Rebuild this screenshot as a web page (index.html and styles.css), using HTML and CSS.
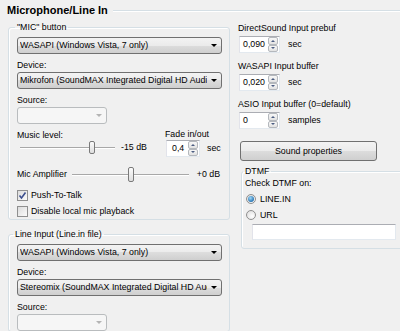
FILE: index.html
```html
<!DOCTYPE html>
<html lang="en">

<head>
    <meta charset="UTF-8">
    <meta name="viewport" content="width=device-width, initial-scale=1.0">
    <title>Microphone/Line In</title>
    <link rel="stylesheet" href="styles.css">
</head>

<body>
    <div class="heading">
        <span>Microphone/Line In</span>
        <div class="heading-line"></div>
    </div>

    <div class="columns">
        <div class="col-left">
            <fieldset class="group">
                <legend>"MIC" button</legend>
                <div class="combo">
                    <span class="combo-text">WASAPI (Windows Vista, 7 only)</span>
                    <span class="combo-btn"><span class="combo-arrow"></span></span>
                </div>
                <div class="field-label">Device:</div>
                <div class="combo">
                    <span class="combo-text">Mikrofon (SoundMAX Integrated Digital HD Audio)</span>
                    <span class="combo-btn"><span class="combo-arrow"></span></span>
                </div>
                <div class="field-label">Source:</div>
                <div class="combo combo-small disabled">
                    <span class="combo-text"></span>
                    <span class="combo-btn"><span class="combo-arrow"></span></span>
                </div>

                <div class="level-row">
                    <div class="level">
                        <div class="level-label">Music level:</div>
                        <div class="slider-row">
                            <div class="slider slider-music">
                                <div class="slider-track"></div>
                                <div class="slider-thumb" style="left: 69px"></div>
                            </div>
                            <span>-15 dB</span>
                        </div>
                    </div>
                    <div class="fade">
                        <div class="fade-label">Fade in/out</div>
                        <div class="spin-row">
                            <div class="spin spin-fade">
                                <span class="spin-value">0,4</span>
                                <span class="spin-buttons">
                                    <span class="spin-btn"><span class="arrow-up"></span></span>
                                    <span class="spin-btn"><span class="arrow-down"></span></span>
                                </span>
                            </div>
                            <span>sec</span>
                        </div>
                    </div>
                </div>

                <div class="amp-row">
                    <span>Mic Amplifier</span>
                    <div class="slider slider-amp">
                        <div class="slider-track"></div>
                        <div class="slider-thumb" style="left: 56px"></div>
                    </div>
                    <span>+0 dB</span>
                </div>

                <label class="check check-first">
                    <span class="box">
                        <svg width="9" height="9" viewBox="0 0 9 9"><polyline points="1.5,4.5 3.5,7 7.5,1.5" fill="none" stroke="#3c4f8e" stroke-width="1.6"/></svg>
                    </span>
                    Push-To-Talk
                </label>
                <label class="check">
                    <span class="box"></span>
                    Disable local mic playback
                </label>
            </fieldset>

            <fieldset class="group group-line">
                <legend>Line Input (Line.in file)</legend>
                <div class="combo">
                    <span class="combo-text">WASAPI (Windows Vista, 7 only)</span>
                    <span class="combo-btn"><span class="combo-arrow"></span></span>
                </div>
                <div class="field-label">Device:</div>
                <div class="combo">
                    <span class="combo-text">Stereomix (SoundMAX Integrated Digital HD Audio)</span>
                    <span class="combo-btn"><span class="combo-arrow"></span></span>
                </div>
                <div class="field-label">Source:</div>
                <div class="combo combo-small disabled">
                    <span class="combo-text"></span>
                    <span class="combo-btn"><span class="combo-arrow"></span></span>
                </div>
            </fieldset>
        </div>

        <div class="col-right">
            <div class="buf-label">DirectSound Input prebuf</div>
            <div class="spin-row buf-row">
                <div class="spin spin-buf">
                    <span class="spin-value">0,090</span>
                    <span class="spin-buttons">
                        <span class="spin-btn"><span class="arrow-up"></span></span>
                        <span class="spin-btn"><span class="arrow-down"></span></span>
                    </span>
                </div>
                <span>sec</span>
            </div>

            <div class="buf-label">WASAPI Input buffer</div>
            <div class="spin-row buf-row">
                <div class="spin spin-buf">
                    <span class="spin-value">0,020</span>
                    <span class="spin-buttons">
                        <span class="spin-btn"><span class="arrow-up"></span></span>
                        <span class="spin-btn"><span class="arrow-down"></span></span>
                    </span>
                </div>
                <span>sec</span>
            </div>

            <div class="buf-label">ASIO Input buffer (0=default)</div>
            <div class="spin-row buf-row">
                <div class="spin spin-buf">
                    <span class="spin-value">0</span>
                    <span class="spin-buttons">
                        <span class="spin-btn"><span class="arrow-up"></span></span>
                        <span class="spin-btn"><span class="arrow-down"></span></span>
                    </span>
                </div>
                <span>samples</span>
            </div>

            <button type="button" class="btn">Sound properties</button>

            <fieldset class="group group-dtmf">
                <legend>DTMF</legend>
                <div class="dtmf-label">Check DTMF on:</div>
                <label class="radio"><span class="dot checked"></span>LINE.IN</label>
                <label class="radio"><span class="dot"></span>URL</label>
                <div class="url-input"></div>
            </fieldset>
        </div>
    </div>
</body>

</html>
```

FILE: styles.css
```css
body {
    margin: 0;
    width: 400px;
    height: 331px;
    overflow: hidden;
    background-color: #f0f0f0;
    color: #000;
    font-family: "Liberation Sans", Arial, sans-serif;
    font-size: 8.8px;
    line-height: 11px;
}

.heading {
    display: flex;
    align-items: center;
    gap: 5px;
    padding: 3px 0 0 7px;
    font-size: 11px;
    font-weight: bold;
    line-height: 14px;
}

.heading-line {
    flex: 1;
    margin-top: 2px;
    border-top: 1px solid #d5dfe5;
    border-bottom: 1px solid #fff;
}

.columns {
    display: flex;
    gap: 8px;
    padding: 4px 0 0 8px;
}

.col-left {
    width: 222px;
    flex-shrink: 0;
}

.col-right {
    flex: 1;
    min-width: 0;
    padding-top: 2px;
}

/* group boxes */

.group {
    box-sizing: border-box;
    width: 100%;
    min-width: 0;
    margin: 0;
    padding: 4px 7px 0 8px;
    border: 1px solid #d5dfe5;
    border-radius: 3px;
    box-shadow: inset 1px 1px 0 #fff;
}

.group legend {
    margin-left: -2px;
    padding: 0 2px;
    line-height: 12px;
}

.group-line {
    margin-top: 8px;
}

.group-line legend {
    margin-left: -4px;
}

.field-label {
    margin: 6px 0 1px;
}

/* combo boxes */

.combo {
    display: flex;
    align-items: center;
    box-sizing: border-box;
    height: 17px;
    padding-left: 2px;
    border: 1px solid #707070;
    border-radius: 3px;
    background: linear-gradient(#f3f3f3, #ebebeb 50%, #dddddd 50%, #cfcfcf);
}

.combo-text {
    flex: 1;
    overflow: hidden;
    white-space: nowrap;
}

.combo-btn {
    display: flex;
    justify-content: center;
    width: 14px;
}

.combo-arrow {
    width: 0;
    height: 0;
    border-left: 3px solid transparent;
    border-right: 3px solid transparent;
    border-top: 3px solid #000;
}

.combo-small {
    width: 90px;
}

.combo.disabled {
    border-color: #b9bcbe;
    background: #f6f6f6;
}

.combo.disabled .combo-arrow {
    border-top-color: #b4b4b4;
}

/* sliders */

.level-row {
    display: flex;
    margin-top: 5px;
}

.level {
    width: 148px;
    padding-top: 1px;
}

.slider-row {
    display: flex;
    align-items: center;
    gap: 6px;
}

.slider {
    position: relative;
    display: flex;
    align-items: center;
    height: 13px;
}

.slider-track {
    flex: 1;
    height: 1px;
    background-color: #a8a8a8;
    border-bottom: 1px solid #fff;
}

.slider-thumb {
    position: absolute;
    top: 0;
    box-sizing: border-box;
    width: 6px;
    height: 13px;
    border: 1px solid #7a7a7a;
    border-radius: 2px;
    background: linear-gradient(#fbfbfb, #dedede);
}

.slider-music {
    width: 95px;
    margin-left: 3px;
}

.amp-row {
    display: flex;
    align-items: center;
    height: 15px;
    margin-top: 10px;
}

.slider-amp {
    width: 117px;
    height: 15px;
    margin: 0 8px 0 5px;
}

.slider-amp .slider-thumb {
    height: 15px;
}

/* spin edits */

.spin-row {
    display: flex;
    align-items: center;
    gap: 7px;
}

.spin {
    display: flex;
    box-sizing: border-box;
    height: 17px;
    border: 1px solid #abadb3;
    border-color: #abadb3 #e3e9ef #e3e9ef #e2e3ea;
    background-color: #fff;
}

.spin-value {
    flex: 1;
    padding-left: 5px;
    line-height: 15px;
}

.spin-buttons {
    display: flex;
    flex-direction: column;
    width: 10px;
    margin: 0 1px 0 0;
}

.spin-btn {
    display: flex;
    flex: 1;
    align-items: center;
    justify-content: center;
    border: 1px solid #b4b8bd;
    border-radius: 2px;
    background: linear-gradient(#f7f7f7, #e2e2e2);
}

.arrow-up,
.arrow-down {
    width: 0;
    height: 0;
    border-left: 2px solid transparent;
    border-right: 2px solid transparent;
}

.arrow-up {
    border-bottom: 2px solid #4b5d82;
}

.arrow-down {
    border-top: 2px solid #4b5d82;
}

.spin-fade {
    width: 34px;
    margin-left: 1px;
}

/* check boxes and radios */

.check,
.radio {
    display: flex;
    align-items: center;
    gap: 3px;
    height: 16px;
}

.check-first {
    margin-top: 5px;
}

.box {
    display: flex;
    align-items: center;
    justify-content: center;
    box-sizing: border-box;
    width: 11px;
    height: 11px;
    border: 1px solid #8f8f8f;
    background: linear-gradient(135deg, #dcdcdc, #fbfbfb);
}

.dot {
    position: relative;
    box-sizing: border-box;
    width: 10px;
    height: 10px;
    margin-left: 1px;
    border: 1px solid #8f8f8f;
    border-radius: 50%;
    background: radial-gradient(circle at 65% 65%, #fff, #d8d8d8);
}

.dot.checked::after {
    content: "";
    position: absolute;
    top: 1px;
    left: 1px;
    width: 6px;
    height: 6px;
    border-radius: 50%;
    background: radial-gradient(circle at 40% 35%, #9fd8f8, #2a76b4 70%, #1c4f80);
}

.radio {
    gap: 4px;
}

/* right column */

.buf-label {
    margin-top: 8px;
}

.buf-label:first-child {
    margin-top: 0;
}

.buf-row {
    gap: 8px;
    margin-top: 2px;
    padding-left: 1px;
}

.spin-buf {
    width: 41px;
}

.spin-buf .spin-value {
    padding-left: 3px;
}

.btn {
    display: block;
    box-sizing: border-box;
    width: 137px;
    height: 20px;
    margin: 12px 0 0 2px;
    padding: 0;
    border: 1px solid #707070;
    border-radius: 3px;
    background: linear-gradient(#f3f3f3, #ebebeb 50%, #dddddd 50%, #cfcfcf);
    color: #000;
    font: inherit;
}

.group-dtmf {
    width: auto;
    margin: 4px -20px 0 3px;
    padding: 1px 0 8px 3px;
}

.dtmf-label {
    margin-bottom: 2px;
}

.url-input {
    box-sizing: border-box;
    width: 144px;
    height: 16px;
    margin: 1px 0 0 7px;
    border: 1px solid #abadb3;
    border-color: #abadb3 #e3e9ef #e3e9ef #e2e3ea;
    background-color: #fff;
}
```
